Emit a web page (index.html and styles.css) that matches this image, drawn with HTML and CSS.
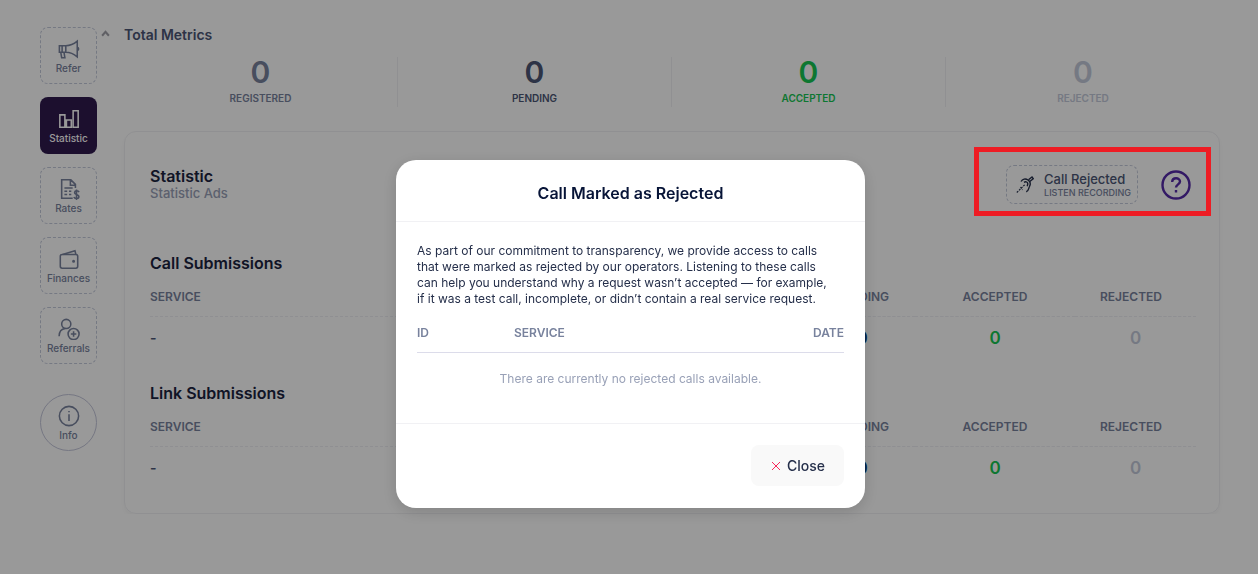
FILE: index.html
```html
<!DOCTYPE html>
<html lang="en">
<head>
<meta charset="utf-8">
<meta name="viewport" content="width=device-width, initial-scale=1">
<title>Statistic</title>
<link rel="stylesheet" href="styles.css">
</head>
<body>
<div class="layout">
  <nav class="sidebar" aria-label="Main">
    <a class="tile" href="#">
      <svg class="tile-icon" viewBox="0 0 24 24"><path d="M1.500 8.500h7v7h-7zM8.500 8.500c5 0 9-2 12.500-5v17c-3.500-3-7.500-5-12.500-5M3 15.500l1 6h3.500l-1-6M21 10.500a1.500 1.500 0 0 1 0 3M4.500 8.500v7"/></svg>
      <span>Refer</span>
    </a>
    <a class="tile tile-active" href="#" aria-current="page">
      <svg class="tile-icon" viewBox="0 0 24 24"><path d="M2 7.500h5.500V21H2zM9.200 13h5.300v8H9.200zM16.500 3H22v18h-5.500z"/></svg>
      <span>Statistic</span>
    </a>
    <a class="tile" href="#">
      <svg class="tile-icon" viewBox="0 0 24 24"><path d="M16 22H4V2h10l5 5v4M13.500 2v6H19M7 11h9M7 14.500h3M7 18h3M12 14.500h2.500M12 18h2.500"/><path d="M23 15.500c-.5-1-1.500-1.500-2.500-1.500-3 0-3.300 3.300-.5 4 3.800.9 3.500 4.500.3 4.500-1.500 0-2.500-.5-3-1.700M20.200 12.500V24"/></svg>
      <span>Rates</span>
    </a>
    <a class="tile" href="#">
      <svg class="tile-icon" viewBox="0 0 24 24"><rect x="2.500" y="7" width="19" height="15" rx="2"/><path d="M5 7l13.500-4 1 4"/><circle cx="17" cy="14.500" r=".8"/></svg>
      <span>Finances</span>
    </a>
    <a class="tile" href="#">
      <svg class="tile-icon" viewBox="0 0 24 24"><circle cx="9" cy="6.500" r="5"/><path d="M1.200 20c0-4.500 2.500-8 6.800-8.500"/><circle cx="17" cy="17.500" r="6"/><path d="M17 14.500v6M14 17.500h6"/></svg>
      <span>Referrals</span>
    </a>
    <a class="tile tile-info" href="#">
      <svg class="tile-icon" viewBox="0 0 24 24"><circle cx="12" cy="12" r="10.500"/><path d="M12 10v7.500M12 6.500v1.500"/></svg>
      <span>Info</span>
    </a>
  </nav>

  <button class="collapse" type="button" aria-label="Collapse metrics">
    <svg class="collapse-icon" viewBox="0 0 8 6"><path d="M1 5l3-3.500L7 5"/></svg>
  </button>

  <main class="main">
    <h1 class="metrics-title">Total Metrics</h1>
    <section class="metrics">
      <div class="metric is-registered"><strong>0</strong><span>REGISTERED</span></div>
      <div class="metric is-pending"><strong>0</strong><span>PENDING</span></div>
      <div class="metric is-accepted"><strong>0</strong><span>ACCEPTED</span></div>
      <div class="metric is-rejected"><strong>0</strong><span>REJECTED</span></div>
    </section>

    <section class="card">
      <header class="card-header">
        <div class="card-title">
          <h2 class="heading">Statistic</h2>
          <p class="subheading">Statistic Ads</p>
        </div>
        <div class="toolbar">
          <button class="listen" type="button">
            <svg class="listen-icon" viewBox="0 0 18 18"><path d="M5 5.500C6.500 2.800 9.500 2.200 12 4c2.500 1.800 2.600 4.500 1.500 6.500-1.200 2-.6 4.800-3.300 5.300M8 6.300c1.500-1 3.300-.5 3.700.9.300 1.200-.2 2-.5 3"/><path d="M12.500 3.800L16 1l1.200 1.700-3.400 2.800"/><path class="listen-dots" d="M.8 16.500L9 8.500M4.500 11l2 3"/></svg>
            <span class="listen-text"><span class="listen-title">Call Rejected</span><span class="listen-note">LISTEN RECORDING</span></span>
          </button>
          <button class="help" type="button" aria-label="Help">
            <svg class="help-icon" viewBox="0 0 30 30"><circle cx="15" cy="15" r="13.500"/><path d="M11.200 12c0-5 7.800-4.800 7.800-.4 0 2.800-4 2.800-4 5.900"/><path d="M15 20v2.500"/></svg>
          </button>
        </div>
      </header>

      <h2 class="heading">Call Submissions</h2>
      <table class="stats">
        <thead><tr><th class="col-service">SERVICE</th><th class="col-registered">REGISTERED</th><th class="col-pending">PENDING</th><th class="col-accepted">ACCEPTED</th><th class="col-rejected">REJECTED</th></tr></thead>
        <tbody><tr><td class="service">-</td><td class="is-registered">0</td><td class="is-count">0</td><td class="is-accepted">0</td><td class="is-rejected">0</td></tr></tbody>
      </table>

      <h2 class="heading">Link Submissions</h2>
      <table class="stats">
        <thead><tr><th class="col-service">SERVICE</th><th class="col-registered">REGISTERED</th><th class="col-pending">PENDING</th><th class="col-accepted">ACCEPTED</th><th class="col-rejected">REJECTED</th></tr></thead>
        <tbody><tr><td class="service">-</td><td class="is-registered">0</td><td class="is-count">0</td><td class="is-accepted">0</td><td class="is-rejected">0</td></tr></tbody>
      </table>
    </section>
  </main>
</div>

<div class="backdrop">
  <div class="modal" role="dialog" aria-modal="true" aria-labelledby="modal-title">
    <h2 class="modal-title" id="modal-title">Call Marked as Rejected</h2>
    <div class="modal-body">
      <p class="modal-text">As part of our commitment to transparency, we provide access to calls that were marked as rejected by our operators. Listening to these calls can help you understand why a request wasn’t accepted — for example, if it was a test call, incomplete, or didn’t contain a real service request.</p>
      <table class="calls">
        <thead><tr><th class="calls-id">ID</th><th>SERVICE</th><th class="calls-date">DATE</th></tr></thead>
        <tbody><tr><td colspan="3">There are currently no rejected calls available.</td></tr></tbody>
      </table>
    </div>
    <footer class="modal-footer">
      <button class="close" type="button">
        <svg class="close-icon" viewBox="0 0 10 10"><path d="M1 1l8 8M9 1l-8 8"/></svg>
        Close
      </button>
    </footer>
  </div>
</div>
</body>
</html>
```
FILE: styles.css
```css
* {
  box-sizing: border-box;
}

body {
  margin: 0;
  background: #fff;
  color: #4b5675;
  font-family: Inter, "Liberation Sans", sans-serif;
  font-size: 13px;
}

h1, h2, p {
  margin: 0;
}

button {
  font: inherit;
  color: inherit;
  background: none;
  border: 0;
  padding: 0;
  cursor: pointer;
}

svg {
  display: block;
  fill: none;
  stroke: currentColor;
}

.layout {
  display: flex;
  align-items: flex-start;
  padding: 27px 38px 0 40px;
}

.sidebar {
  display: flex;
  flex-direction: column;
  gap: 13px;
  width: 57px;
  flex: none;
}

.tile {
  display: flex;
  flex-direction: column;
  align-items: center;
  justify-content: center;
  height: 57px;
  padding-top: 3px;
  border: 1px dashed #c4cada;
  border-radius: 8px;
  color: #78829d;
  font-size: 10px;
  font-weight: 500;
  line-height: 16px;
  text-decoration: none;
}

.tile-icon {
  width: 22px;
  height: 22px;
  stroke-width: 1.7;
}

.tile-active {
  border: 0;
  background: #2f194e;
  color: #fff;
}

.tile-info {
  margin-top: 17px;
  border: 1px solid #c4c6da;
  border-radius: 50%;
}

.collapse {
  flex: none;
  width: 27px;
  padding: 3px 0 0 4px;
}

.collapse-icon {
  width: 9px;
  height: 7px;
  color: #a0a0a8;
  stroke-width: 1.8;
}

.main {
  flex: 1;
  min-width: 0;
}

.metrics-title {
  font-size: 14px;
  font-weight: 600;
  line-height: 16px;
}

.metrics {
  display: grid;
  grid-template-columns: repeat(4, 1fr);
  margin-top: 14px;
}

.metric {
  display: flex;
  flex-direction: column;
  align-items: center;
  gap: 3px;
  height: 50px;
  border-right: 1px solid #f1f1f4;
  font-size: 10px;
  font-weight: 600;
  line-height: 16px;
}

.metric:last-child {
  border-right: 0;
}

.metric strong {
  font-size: 30px;
  font-weight: 600;
  line-height: 30px;
}

.is-registered {
  color: #78829d;
}

.is-pending {
  color: #4b5675;
}

.is-count {
  color: #0a3a75;
}

.is-accepted {
  color: #17c653;
}

.is-rejected {
  color: #c4cada;
}

.card {
  margin-top: 24px;
  padding: 33px 23px 24px 25px;
  border: 1px solid #f1f1f4;
  border-radius: 12px;
  box-shadow: 0 3px 4px rgba(0, 0, 0, 0.03);
}

.card-header {
  display: flex;
  justify-content: space-between;
  align-items: flex-start;
  margin-bottom: 47px;
}

.heading {
  color: #1b2340;
  font-size: 16px;
  font-weight: 600;
  line-height: 24px;
}

.card-title .heading {
  line-height: 22px;
}

.subheading {
  color: #99a1b7;
  font-size: 13px;
  font-weight: 500;
  line-height: 12px;
}

.toolbar {
  position: relative;
  display: flex;
  align-items: center;
  gap: 23px;
  padding-right: 5px;
}

.toolbar::after {
  content: "";
  position: absolute;
  inset: -18px -15px -12px -32px;
  border: 5px solid #ee1c24;
  z-index: 20;
  pointer-events: none;
}

.listen {
  display: flex;
  align-items: center;
  gap: 10px;
  height: 39px;
  padding: 0 6px 0 9px;
  border: 1px dashed #c4cada;
  border-radius: 8px;
  text-align: left;
}

.listen-icon {
  width: 18px;
  height: 18px;
  color: #252f4a;
  stroke-width: 1.4;
}

.listen-dots {
  stroke-dasharray: 2 1;
  stroke-width: 1.1;
}

.listen-text {
  display: flex;
  flex-direction: column;
}

.listen-title {
  font-size: 13px;
  font-weight: 500;
  line-height: 16px;
}

.listen-note {
  color: #78829d;
  font-size: 9px;
  font-weight: 500;
  line-height: 12px;
}

.help-icon {
  width: 30px;
  height: 30px;
  color: #552aa8;
  stroke-width: 2.4;
}

.stats {
  width: 100%;
  table-layout: fixed;
  border-collapse: collapse;
  margin-top: 3px;
}

.stats + .heading {
  margin-top: 22px;
}

.stats th {
  height: 38px;
  padding: 0;
  border-bottom: 1px dashed #eeeff4;
  color: #78829d;
  font-size: 12px;
  font-weight: 600;
}

.stats td {
  height: 43px;
  padding: 0;
  font-size: 17px;
  font-weight: 600;
  text-align: center;
}

.stats .service {
  font-size: 14px;
  text-align: left;
}

.stats .col-service {
  text-align: left;
}

.stats .col-registered {
  width: 136px;
}

.stats .col-pending {
  width: 106px;
}

.stats .col-accepted {
  width: 160px;
}

.stats .col-rejected {
  width: 121px;
  padding-right: 9px;
}

.backdrop {
  position: fixed;
  inset: 0;
  z-index: 10;
  display: flex;
  justify-content: center;
  align-items: flex-start;
  padding: 160px 0 0 3px;
  background: rgba(0, 0, 0, 0.4);
}

.modal {
  width: 469px;
  max-width: 100%;
  border-radius: 20px;
  background: #fff;
  box-shadow: 0 4px 16px rgba(0, 0, 0, 0.15);
}

.modal-title {
  padding: 21px 21px 16px;
  border-bottom: 1px solid #f1f1f4;
  color: #071437;
  font-size: 16px;
  font-weight: 600;
  line-height: 24px;
  text-align: center;
}

.modal-body {
  padding: 21px 21px 19px;
}

.modal-text {
  padding-right: 12px;
  color: #252f4a;
  font-size: 12px;
  line-height: 16px;
}

.calls {
  width: 100%;
  margin-top: 7px;
  border-collapse: collapse;
}

.calls th {
  height: 38px;
  padding: 0;
  border-bottom: 1px solid #dcdcea;
  color: #78829d;
  font-size: 12px;
  font-weight: 600;
  text-align: left;
}

.calls .calls-id {
  width: 97px;
}

.calls .calls-date {
  text-align: right;
}

.calls td {
  height: 52px;
  padding: 0;
  color: #99a1b7;
  font-size: 12px;
  text-align: center;
}

.modal-footer {
  display: flex;
  justify-content: flex-end;
  padding: 21px 21px 22px;
  border-top: 1px solid #f1f1f4;
}

.close {
  display: flex;
  align-items: center;
  gap: 6px;
  height: 41px;
  padding: 0 19px 0 20px;
  border-radius: 8px;
  background: #f9f9f9;
  color: #252f4a;
  font-size: 14px;
  font-weight: 500;
}

.close-icon {
  width: 10px;
  height: 10px;
  color: #f8285a;
}
```
